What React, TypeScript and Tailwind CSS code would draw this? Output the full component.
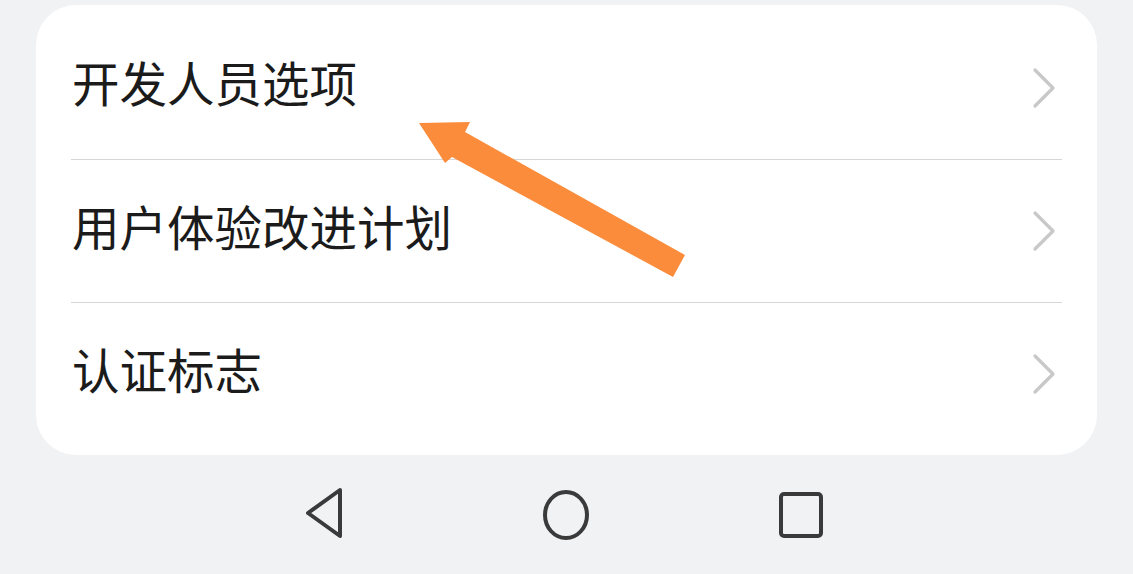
const items = ['开发人员选项', '用户体验改进计划', '认证标志'];

const Chevron = () => (
  <svg width="26" height="42" viewBox="0 0 26 42" className="text-[#c8c8c8] mr-[5px]">
    <path d="M4 3 L22 21 L4 39" fill="none" stroke="currentColor" strokeWidth="3.2" strokeLinecap="round" strokeLinejoin="round" />
  </svg>
);

const App = () => {
  return (
    <div className="relative w-[1133px] h-[574px] overflow-hidden bg-[#f1f2f4] font-['Noto_Sans_CJK_SC','Noto_Sans',sans-serif]">
      <div className="pt-[5px] px-[36px]">
        <div className="bg-white rounded-[40px] pt-[11px] pb-[10px] pl-[35px] pr-[35px]">
          {items.map((label, i) => (
            <div
              key={label}
              className={`flex items-center justify-between h-[143px] ${i > 0 ? 'border-t border-[#d6d6d6]' : ''}`}
            >
              <span className="text-[47.5px] leading-none font-normal text-[#1b1b1b] pl-[1px] pb-[11px]">{label}</span>
              <Chevron />
            </div>
          ))}
        </div>
      </div>

      <div className="flex items-center h-[119px] pl-[302px]">
        <svg width="44" height="56" viewBox="0 0 44 56" className="text-[#3a3a3a]">
          <path d="M38 3 L6 26 L38 49 Z" fill="none" stroke="currentColor" strokeWidth="4" strokeLinejoin="round" />
        </svg>
        <svg width="52" height="52" viewBox="0 0 52 52" className="text-[#3a3a3a] ml-[194px]">
          <ellipse cx="26" cy="26" rx="21" ry="23" fill="none" stroke="currentColor" strokeWidth="4" />
        </svg>
        <svg width="48" height="48" viewBox="0 0 48 48" className="text-[#3a3a3a] ml-[186px]">
          <rect x="3" y="3" width="40" height="42" rx="3" fill="none" stroke="currentColor" strokeWidth="4" />
        </svg>
      </div>

      <svg className="absolute left-0 top-0 pointer-events-none" width="1133" height="574">
        <polygon
          points="419,123 470,122 465,132 685,255 673,277 452,157 445,163"
          fill="#fb8c3b"
        />
      </svg>
    </div>
  );
};

export default App;
